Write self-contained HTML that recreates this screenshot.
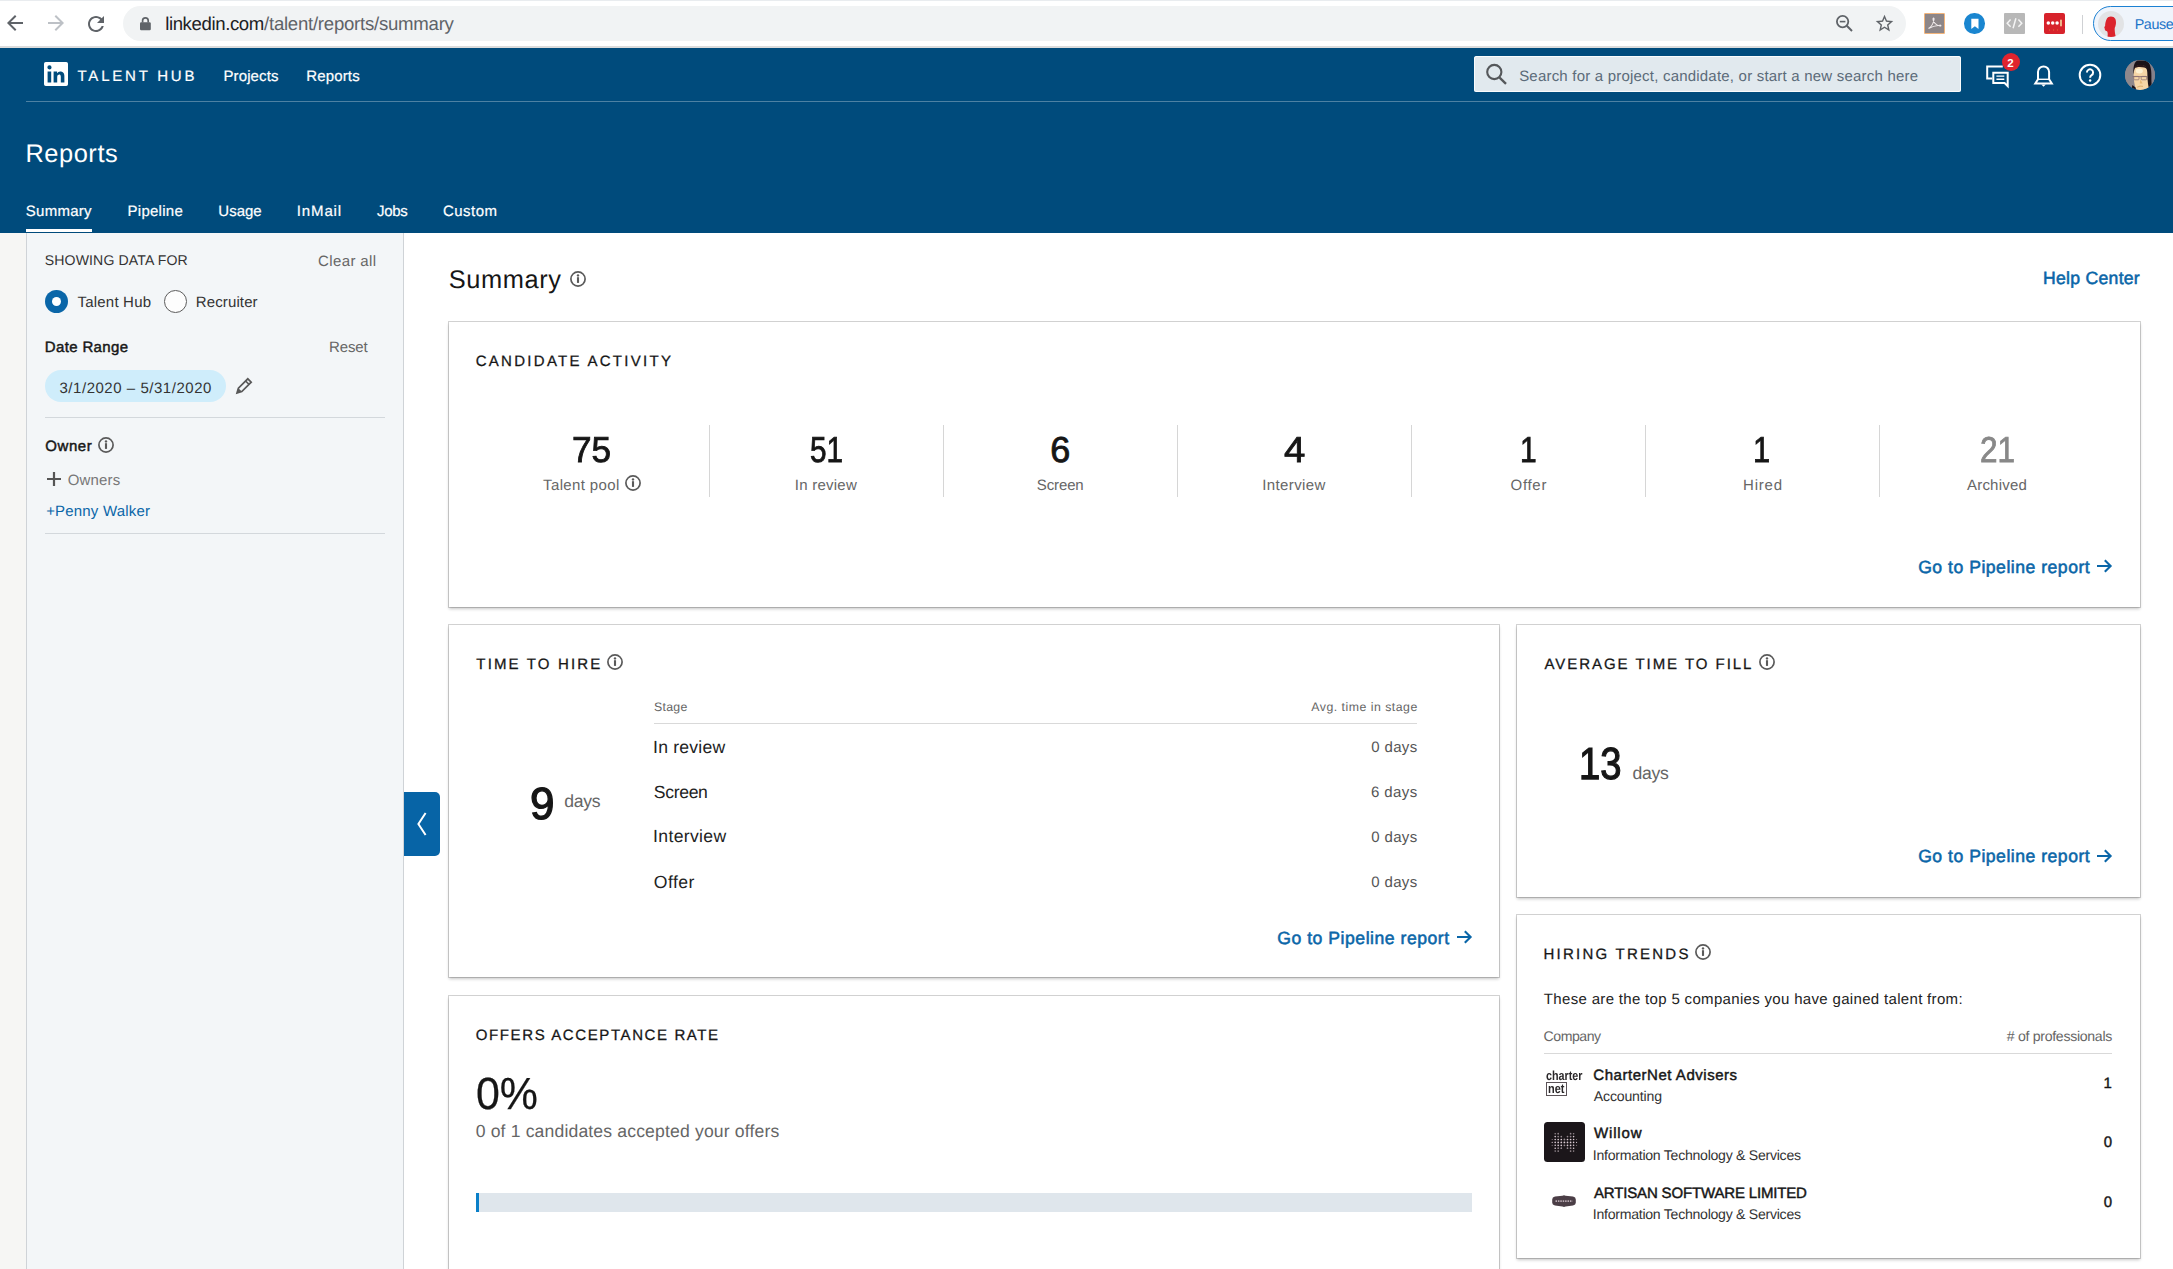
<!DOCTYPE html>
<html lang="en">
<head>
<meta charset="utf-8">
<title>Reports | LinkedIn Talent Hub</title>
<style>
*{box-sizing:border-box;margin:0;padding:0}
html,body{width:2173px;height:1269px;overflow:hidden;background:#fff}
body{font-family:"Liberation Sans",sans-serif;position:relative;text-rendering:geometricPrecision}
.abs{position:absolute}
.t{position:absolute;white-space:nowrap;line-height:normal}
svg{position:absolute;overflow:visible}
#chrome{position:absolute;left:0;top:0;width:2173px;height:48px;background:#fff}
#omni{position:absolute;left:123px;top:6px;width:1783px;height:35px;border-radius:17.5px;background:#f1f3f4}
#chromeline{position:absolute;left:0;top:46px;width:2173px;height:2px;background:#dcdcdc}
#hdr{position:absolute;left:0;top:48px;width:2173px;height:185px;background:#004b7c}
#navline{position:absolute;left:26px;top:101px;width:2147px;height:1px;background:#4d81a3}
#tabline{position:absolute;left:26px;top:229px;width:66px;height:3px;background:#fff}
#strip{position:absolute;left:0;top:233px;width:26px;height:1036px;background:#f6f6f4}
#side{position:absolute;left:26px;top:233px;width:378px;height:1036px;background:#f3f6f8;border-left:1px solid #cfd3d7;border-right:1px solid #cfd3d7}
.hr{position:absolute;height:1px;background:#d3d8dc}
.card{position:absolute;background:#fff;box-shadow:0 0 0 1px rgba(0,0,0,.17),0 2px 3px rgba(0,0,0,.22)}
.vd{position:absolute;width:1px;top:425px;height:72px;background:#d6d6d6}
#search{position:absolute;left:1474px;top:56px;width:487px;height:36px;background:#e1e9ee;border-radius:2.5px;box-shadow:inset 0 0 0 1px rgba(255,255,255,.8)}
</style>
</head>
<body>
<!-- ===== Browser chrome ===== -->
<div id="chrome">
  <div class="abs" style="left:0;top:0;width:2173px;height:1px;background:#e9ecef"></div>
  <div id="omni"></div>
  
<svg style="left:3.4px;top:11.2px" width="24" height="24" viewBox="0 0 24 24"><path fill="#5f6368" d="M20 11H7.83l5.59-5.59L12 4l-8 8 8 8 1.41-1.41L7.83 13H20v-2z"/></svg>
<svg style="left:43.5px;top:11.2px" width="24" height="24" viewBox="0 0 24 24"><path fill="#bdc1c6" d="M4 11h12.17l-5.59-5.59L12 4l8 8-8 8-1.41-1.41L16.17 13H4v-2z"/></svg>
<svg style="left:83.5px;top:11.5px" width="24" height="24" viewBox="0 0 24 24"><path fill="#5f6368" d="M17.65 6.35C16.2 4.9 14.21 4 12 4c-4.42 0-7.99 3.58-7.99 8s3.57 8 7.99 8c3.73 0 6.84-2.55 7.73-6h-2.08c-.82 2.33-3.04 4-5.65 4-3.31 0-6-2.69-6-6s2.69-6 6-6c1.66 0 3.14.69 4.22 1.78L13 11h7V4l-2.35 2.35z"/></svg>
<svg style="left:139px;top:16px" width="13" height="15" viewBox="0 0 13 15"><rect x="1" y="6.2" width="10.8" height="8" rx="1.2" fill="#5f6368"/><path d="M3.6 6.5V4.6a2.8 2.8 0 0 1 5.6 0V6.5" fill="none" stroke="#5f6368" stroke-width="1.7"/></svg>
<!-- zoom out -->
<svg style="left:1834px;top:13px" width="20" height="20" viewBox="0 0 20 20"><circle cx="8.6" cy="8.6" r="5.7" fill="none" stroke="#5f6368" stroke-width="1.8"/><path d="M12.8 12.8L18 18" stroke="#5f6368" stroke-width="2"/><path d="M5.8 8.6H11.4" stroke="#5f6368" stroke-width="1.6"/></svg>
<!-- star -->
<svg style="left:1874px;top:13px" width="21" height="21" viewBox="0 0 24 24"><path fill="#5f6368" d="M22 9.24l-7.19-.62L12 2 9.19 8.63 2 9.24l5.46 4.73L5.82 21 12 17.27 18.18 21l-1.63-7.03L22 9.24zM12 15.4l-3.76 2.27 1-4.28-3.32-2.88 4.38-.38L12 6.1l1.71 4.04 4.38.38-3.32 2.88 1 4.28L12 15.4z"/></svg>
<!-- acrobat ext -->
<div class="abs" style="left:1924px;top:13px;width:21px;height:21px;background:#8d8688;border:1.5px solid #f2b47a;border-radius:1px"></div>
<svg style="left:1926px;top:15px" width="17" height="17" viewBox="0 0 17 17"><path d="M2.5 13.5C4.5 12.5 7 9.5 8 4.5C8.3 3 7 2.5 7 4C7 7 10 10.5 14 11C15.5 11.2 15 10 13.5 10.2C10 10.5 5 12 2.5 13.5Z" fill="none" stroke="#efe9ea" stroke-width="1.1"/></svg>
<!-- blue bookmark ext -->
<div class="abs" style="left:1964.4px;top:13.3px;width:20.4px;height:20.4px;border-radius:50%;background:#1a86d0"></div>
<svg style="left:1969.6px;top:17.9px" width="10" height="12" viewBox="0 0 10 12"><path d="M1.3 0.8H8.5V10.9L4.9 8.3L1.3 10.9Z" fill="#fff"/></svg>
<!-- grey code ext -->
<div class="abs" style="left:2004px;top:13.3px;width:21px;height:20.4px;background:#b8b8b8;border-radius:1px"></div>
<svg style="left:2004px;top:13.3px" width="21" height="20.4" viewBox="0 0 21 20.4"><path d="M6.6 6.6L3.2 10.2L6.6 13.8M14.4 6.6L17.8 10.2L14.4 13.8M11.9 5.2L9.1 15.2" fill="none" stroke="#f4f4f4" stroke-width="1.5"/></svg>
<!-- lastpass ext -->
<div class="abs" style="left:2044.4px;top:13.3px;width:20.4px;height:20.4px;background:#d7222b;border-radius:2px"></div>
<svg style="left:2044.4px;top:13.3px" width="20.4" height="20.4" viewBox="0 0 20.4 20.4"><circle cx="4.3" cy="10" r="1.75" fill="#fff"/><circle cx="8.7" cy="10" r="1.75" fill="#fff"/><circle cx="13.1" cy="10" r="1.75" fill="#fff"/><rect x="16.2" y="6.7" width="1.6" height="6.6" fill="#f3d9a0"/><circle cx="5.6" cy="17" r="0.5" fill="#e8a23a"/><circle cx="9.6" cy="17" r="0.5" fill="#e8a23a"/><circle cx="13.6" cy="17" r="0.5" fill="#e8a23a"/></svg>
<div class="abs" style="left:2082px;top:15px;width:1px;height:19px;background:#cfd1d4"></div>
<!-- profile pill -->
<div class="abs" style="left:2093.3px;top:6px;width:120px;height:35px;border-radius:17.5px;border:1.6px solid #1b80d2;background:#eff4fb"></div>
<div class="abs" style="left:2097.6px;top:10.5px;width:26px;height:26px;border-radius:50%;background:#e2e3e5;overflow:hidden">
  <svg style="left:-1.6px;top:0.4px" width="30" height="30" viewBox="0 0 26 26"><path d="M9.5 6.5C10.5 4.2 15.5 4 16.8 7C17.8 9.5 17.2 12.5 16.3 14.5C16 16 16.4 19.5 17.2 22.5L9.8 23C10.4 20 10.2 18.5 9.6 17.5C8.2 17.3 7.4 16.4 7.6 15.2C6.9 14.7 7.2 13.6 7.9 13C7.9 10.8 8.4 8.6 9.5 6.5Z" fill="#dc232c"/></svg>
</div>

</div>
<div id="chromeline"></div>

<!-- ===== LinkedIn header ===== -->
<div id="hdr"></div>
<div id="navline"></div>
<div id="tabline"></div>
<div id="search"></div>

<!-- linkedin logo -->
<svg style="left:44px;top:62px" width="24" height="24" viewBox="2 2 20 20"><path fill="#fff" d="M20.5 2h-17A1.5 1.5 0 002 3.5v17A1.5 1.5 0 003.5 22h17a1.5 1.5 0 001.5-1.5v-17A1.5 1.5 0 0020.5 2zM8 19H5v-9h3zM6.5 8.25A1.75 1.75 0 118.3 6.5a1.78 1.78 0 01-1.8 1.75zM19 19h-3v-4.74c0-1.42-.6-1.93-1.38-1.93A1.74 1.74 0 0013 14.19a.66.66 0 000 .14V19h-3v-9h2.9v1.3a3.11 3.11 0 012.7-1.4c1.55 0 3.36.86 3.36 3.66z"/></svg>
<!-- search icon -->
<svg style="left:1484px;top:62px" width="24" height="24" viewBox="0 0 24 24"><circle cx="10.3" cy="10" r="7.1" fill="none" stroke="#55585b" stroke-width="2.1"/><path d="M15.6 15.6L22 21.8" stroke="#55585b" stroke-width="2.3"/></svg>
<!-- messages -->
<svg style="left:1984px;top:62px" width="28" height="28" viewBox="0 0 28 28"><path d="M18.8 4.6H3.2V16.4H8.2" fill="none" stroke="#fff" stroke-width="2"/><path d="M9.3 10.7H23.7V24.2L20.6 21.1H9.3Z" fill="none" stroke="#fff" stroke-width="2" stroke-linejoin="miter"/><path d="M12.4 14.1H20.3M12.4 17.2H20.3" stroke="#fff" stroke-width="1.4"/></svg>
<div class="abs" style="left:2001.8px;top:52.8px;width:18.4px;height:18.4px;border-radius:50%;background:#e0242e"></div>
<!-- bell -->
<svg style="left:2031px;top:62px" width="26" height="28" viewBox="0 0 26 28"><path d="M7 17.3V10a5.55 5.55 0 0 1 11.1 0V17.3L20.8 21.5H4.3Z" fill="none" stroke="#fff" stroke-width="2" stroke-linejoin="miter"/><path d="M7 17.3H18.1" stroke="#fff" stroke-width="1.4"/><path d="M10.3 22.4H14.8L12.55 24.8Z" fill="#fff"/></svg>
<!-- help -->
<svg style="left:2077.6px;top:63.4px" width="24" height="24" viewBox="0 0 24 24"><circle cx="12" cy="12" r="10.3" fill="none" stroke="#fff" stroke-width="2"/><path d="M8.9 9.4a3.1 3.1 0 1 1 4.7 2.7c-1 .6-1.5 1.2-1.5 2.6" fill="none" stroke="#fff" stroke-width="2"/><circle cx="12.1" cy="17.6" r="1.25" fill="#fff"/></svg>
<!-- avatar -->
<div class="abs" style="left:2125px;top:60px;width:30.2px;height:30.2px;border-radius:50%;overflow:hidden;background:#8c868d">
  <svg style="left:0;top:0;filter:blur(0.55px)" width="30" height="30" viewBox="0 0 30 30">
    <rect x="0" y="0" width="9" height="30" fill="#8f888c"/>
    <rect x="23" y="0" width="7" height="30" fill="#85808a"/>
    <path d="M8.4 13C8.2 5.5 10 1.2 12.5 0.6H21.5C25 2.5 26.6 9 26.4 16C26.3 21 26.6 25 27 28L23 29.5L21.5 10L10 9.5L9.4 15Z" fill="#1b1217"/>
    <path d="M8.7 16C8.5 9 10.4 5.1 15.4 5.1S22.6 8 22.4 15C22.2 21 23.4 26 24.4 31H11.4C10.6 28 8.9 24 8.7 16Z" fill="#f6d5a6"/>
    <path d="M8.9 8.6C10 5.6 12.5 4.7 15.5 4.8S21.6 6 22.5 9.4C19.6 6.6 12 6.4 8.9 8.6Z" fill="#2a1719"/>
    <ellipse cx="14.3" cy="11" rx="3.6" ry="2.4" fill="#fdf1d2"/>
    <path d="M7.6 16.6H22.6" stroke="#7a6068" stroke-width="0.8"/>
    <rect x="8.8" y="16.4" width="5.2" height="3.4" rx="0.8" fill="none" stroke="#8a6e72" stroke-width="0.7"/>
    <rect x="16.2" y="16.4" width="5.4" height="3.4" rx="0.8" fill="none" stroke="#8a6e72" stroke-width="0.7"/>
    <path d="M15.4 19.5L17.6 23.4L14.8 23.6Z" fill="#e5b877"/>
    <path d="M12.2 27.2Q15 25.4 18 26.4" stroke="#dcae6c" stroke-width="1" fill="none"/>
    <path d="M7.4 25L10.4 27.4L11.6 31H6Z" fill="#1b1217"/>
  </svg>
</div>


<!-- ===== Sidebar ===== -->
<div id="strip"></div>
<div id="side"></div>
<div class="hr" style="left:45px;top:417px;width:340px"></div>
<div class="hr" style="left:45px;top:533px;width:340px"></div>
<div class="abs" style="left:45px;top:370px;width:181px;height:32px;border-radius:16px;background:#cfedfb"></div>

<!-- radios -->
<div class="abs" style="left:45.2px;top:290px;width:22.8px;height:22.8px;border-radius:50%;background:#0a66a8"></div>
<div class="abs" style="left:51.8px;top:296.6px;width:9.6px;height:9.6px;border-radius:50%;background:#fff"></div>
<div class="abs" style="left:164px;top:290px;width:22.8px;height:22.8px;border-radius:50%;border:1.4px solid #5c5c5c;background:#fdfdfd"></div>
<!-- pencil -->
<svg style="left:234px;top:376px" width="20" height="20" viewBox="0 0 20 20"><path d="M3 17L4.4 12.2L13.8 2.8L17.2 6.2L7.8 15.6Z" fill="none" stroke="#585858" stroke-width="1.7" stroke-linejoin="miter"/><path d="M3 17L4.4 12.2L7.8 15.6Z" fill="#585858"/><path d="M11.6 5L15 8.4" stroke="#585858" stroke-width="1.5"/></svg>
<!-- plus -->
<svg style="left:46px;top:471px" width="16" height="16" viewBox="0 0 16 16"><path d="M1 8H15M8 1V15" stroke="#555" stroke-width="2.2"/></svg>
<svg style="left:95.9px;top:435.2px" width="20" height="20" viewBox="-10 -10 20 20"><circle r="7.1" fill="none" stroke="#5a5a5a" stroke-width="1.7"/><circle cy="-3.6" r="1.2" fill="#5a5a5a"/><rect x="-1.05" y="-1.8" width="2.1" height="5.7" fill="#5a5a5a"/></svg>

<!-- ===== Cards ===== -->
<div class="card" style="left:449px;top:322px;width:1691px;height:285px"></div>
<div class="card" style="left:449px;top:625px;width:1050px;height:352px"></div>
<div class="card" style="left:449px;top:996px;width:1050px;height:300px"></div>
<div class="card" style="left:1517px;top:625px;width:623px;height:272px"></div>
<div class="card" style="left:1517px;top:915px;width:623px;height:343px"></div>
<div class="vd" style="left:709px"></div><div class="vd" style="left:943px"></div><div class="vd" style="left:1177px"></div>
<div class="vd" style="left:1411px"></div><div class="vd" style="left:1645px"></div><div class="vd" style="left:1879px"></div>
<div class="hr" style="left:654px;top:723px;width:763px;background:#d9d9d9"></div>
<div class="hr" style="left:1544px;top:1053px;width:568px;background:#d9d9d9"></div>
<div class="abs" style="left:476px;top:1193px;width:996px;height:19px;background:#dfe6ec"></div>
<div class="abs" style="left:476px;top:1193px;width:3px;height:19px;background:#0a7fc8"></div>
<!-- collapse button -->
<div class="abs" style="left:404px;top:792px;width:36px;height:63.5px;background:#0764a6;border-radius:0 5px 5px 0"></div>
<svg style="left:567.8px;top:269.0px" width="20" height="20" viewBox="-10 -10 20 20"><circle r="7.1" fill="none" stroke="#5a5a5a" stroke-width="1.7"/><circle cy="-3.6" r="1.2" fill="#5a5a5a"/><rect x="-1.05" y="-1.8" width="2.1" height="5.7" fill="#5a5a5a"/></svg><svg style="left:623.0px;top:472.9px" width="20" height="20" viewBox="-10 -10 20 20"><circle r="7.1" fill="none" stroke="#5a5a5a" stroke-width="1.7"/><circle cy="-3.6" r="1.2" fill="#5a5a5a"/><rect x="-1.05" y="-1.8" width="2.1" height="5.7" fill="#5a5a5a"/></svg><svg style="left:604.8px;top:652.0px" width="20" height="20" viewBox="-10 -10 20 20"><circle r="7.1" fill="none" stroke="#5a5a5a" stroke-width="1.7"/><circle cy="-3.6" r="1.2" fill="#5a5a5a"/><rect x="-1.05" y="-1.8" width="2.1" height="5.7" fill="#5a5a5a"/></svg><svg style="left:1757.0px;top:652.0px" width="20" height="20" viewBox="-10 -10 20 20"><circle r="7.1" fill="none" stroke="#5a5a5a" stroke-width="1.7"/><circle cy="-3.6" r="1.2" fill="#5a5a5a"/><rect x="-1.05" y="-1.8" width="2.1" height="5.7" fill="#5a5a5a"/></svg><svg style="left:1693.2px;top:942.0px" width="20" height="20" viewBox="-10 -10 20 20"><circle r="7.1" fill="none" stroke="#5a5a5a" stroke-width="1.7"/><circle cy="-3.6" r="1.2" fill="#5a5a5a"/><rect x="-1.05" y="-1.8" width="2.1" height="5.7" fill="#5a5a5a"/></svg><svg style="left:2095.2px;top:558.4px" width="18" height="16" viewBox="0 0 18 16"><path d="M2 8H15.5M9.8 2.3L15.6 8L9.8 13.7" fill="none" stroke="#0a66a8" stroke-width="2.1" stroke-linejoin="miter"/></svg><svg style="left:1454.8px;top:929.4px" width="18" height="16" viewBox="0 0 18 16"><path d="M2 8H15.5M9.8 2.3L15.6 8L9.8 13.7" fill="none" stroke="#0a66a8" stroke-width="2.1" stroke-linejoin="miter"/></svg><svg style="left:2095.2px;top:847.8px" width="18" height="16" viewBox="0 0 18 16"><path d="M2 8H15.5M9.8 2.3L15.6 8L9.8 13.7" fill="none" stroke="#0a66a8" stroke-width="2.1" stroke-linejoin="miter"/></svg>
<!-- chevron -->
<svg style="left:414px;top:811px" width="16" height="26" viewBox="0 0 16 26"><path d="M11.6 2L4.4 13L11.6 24" fill="none" stroke="#fff" stroke-width="2"/></svg>
<!-- charternet logo -->
<div class="abs" style="left:1544px;top:1066px;width:42px;height:34px;overflow:hidden;font-weight:700;color:#2a2729;font-size:13.2px;line-height:13px">
  <div class="abs" style="left:1.8px;top:2.6px;white-space:nowrap;transform:scaleX(0.815);transform-origin:0 0">charter</div>
  <div class="abs" style="left:2.2px;top:15.7px;width:20.6px;height:14px;border:1.2px solid #5a5257"></div>
  <div class="abs" style="left:4.3px;top:15.7px;white-space:nowrap;transform:scaleX(0.83);transform-origin:0 0">net</div>
</div>
<!-- willow logo -->
<div class="abs" style="left:1544.2px;top:1122px;width:40.8px;height:40px;border-radius:3.5px;background:#1b161a"></div>
<svg style="left:1544.2px;top:1122px" width="41" height="40" viewBox="0 0 41 40"><circle cx="8.2" cy="17.5" r="0.55" fill="#e6d6de" opacity="0.6"/><circle cx="8.2" cy="20.4" r="0.55" fill="#e6d6de" opacity="0.95"/><circle cx="8.2" cy="23.3" r="0.55" fill="#e6d6de" opacity="0.6"/><circle cx="11.2" cy="11.7" r="0.8" fill="#e6d6de" opacity="0.6"/><circle cx="11.2" cy="14.6" r="0.8" fill="#e6d6de" opacity="0.95"/><circle cx="11.2" cy="17.5" r="0.8" fill="#e6d6de" opacity="0.95"/><circle cx="11.2" cy="20.4" r="0.8" fill="#e6d6de" opacity="0.95"/><circle cx="11.2" cy="23.3" r="0.8" fill="#e6d6de" opacity="0.95"/><circle cx="11.2" cy="26.2" r="0.8" fill="#e6d6de" opacity="0.95"/><circle cx="11.2" cy="29.1" r="0.8" fill="#e6d6de" opacity="0.6"/><circle cx="14.2" cy="11.7" r="0.85" fill="#e6d6de" opacity="0.6"/><circle cx="14.2" cy="14.6" r="0.85" fill="#e6d6de" opacity="0.6"/><circle cx="14.2" cy="17.5" r="0.85" fill="#e6d6de" opacity="0.95"/><circle cx="14.2" cy="20.4" r="0.85" fill="#e6d6de" opacity="0.95"/><circle cx="14.2" cy="23.3" r="0.85" fill="#e6d6de" opacity="0.95"/><circle cx="14.2" cy="26.2" r="0.85" fill="#e6d6de" opacity="0.6"/><circle cx="14.2" cy="29.1" r="0.85" fill="#e6d6de" opacity="0.6"/><circle cx="17.3" cy="14.6" r="0.85" fill="#e6d6de" opacity="0.6"/><circle cx="17.3" cy="17.5" r="0.85" fill="#e6d6de" opacity="0.95"/><circle cx="17.3" cy="20.4" r="0.85" fill="#e6d6de" opacity="0.95"/><circle cx="17.3" cy="23.3" r="0.85" fill="#e6d6de" opacity="0.95"/><circle cx="17.3" cy="26.2" r="0.85" fill="#e6d6de" opacity="0.6"/><circle cx="20.4" cy="17.5" r="0.9" fill="#e6d6de" opacity="0.6"/><circle cx="20.4" cy="20.4" r="0.9" fill="#e6d6de" opacity="0.95"/><circle cx="20.4" cy="23.3" r="0.9" fill="#e6d6de" opacity="0.6"/><circle cx="23.5" cy="14.6" r="0.85" fill="#e6d6de" opacity="0.6"/><circle cx="23.5" cy="17.5" r="0.85" fill="#e6d6de" opacity="0.95"/><circle cx="23.5" cy="20.4" r="0.85" fill="#e6d6de" opacity="0.95"/><circle cx="23.5" cy="23.3" r="0.85" fill="#e6d6de" opacity="0.95"/><circle cx="23.5" cy="26.2" r="0.85" fill="#e6d6de" opacity="0.6"/><circle cx="26.6" cy="11.7" r="0.85" fill="#e6d6de" opacity="0.6"/><circle cx="26.6" cy="14.6" r="0.85" fill="#e6d6de" opacity="0.6"/><circle cx="26.6" cy="17.5" r="0.85" fill="#e6d6de" opacity="0.95"/><circle cx="26.6" cy="20.4" r="0.85" fill="#e6d6de" opacity="0.95"/><circle cx="26.6" cy="23.3" r="0.85" fill="#e6d6de" opacity="0.95"/><circle cx="26.6" cy="26.2" r="0.85" fill="#e6d6de" opacity="0.6"/><circle cx="26.6" cy="29.1" r="0.85" fill="#e6d6de" opacity="0.6"/><circle cx="29.6" cy="11.7" r="0.8" fill="#e6d6de" opacity="0.6"/><circle cx="29.6" cy="14.6" r="0.8" fill="#e6d6de" opacity="0.95"/><circle cx="29.6" cy="17.5" r="0.8" fill="#e6d6de" opacity="0.95"/><circle cx="29.6" cy="20.4" r="0.8" fill="#e6d6de" opacity="0.95"/><circle cx="29.6" cy="23.3" r="0.8" fill="#e6d6de" opacity="0.95"/><circle cx="29.6" cy="26.2" r="0.8" fill="#e6d6de" opacity="0.95"/><circle cx="29.6" cy="29.1" r="0.8" fill="#e6d6de" opacity="0.6"/><circle cx="32.6" cy="17.5" r="0.55" fill="#e6d6de" opacity="0.6"/><circle cx="32.6" cy="20.4" r="0.55" fill="#e6d6de" opacity="0.95"/><circle cx="32.6" cy="23.3" r="0.55" fill="#e6d6de" opacity="0.6"/></svg>
<!-- artisan logo -->
<svg style="left:1551.4px;top:1194px" width="26" height="14" viewBox="0 0 26 14"><path d="M1.2 5.4Q1.2 3.2 4 2.6L11.5 1.7L13 1.2L14.5 1.7L22 2.6Q24.8 3.2 24.8 5.4V8.8Q24.8 11 22 11.6L14.5 12.4L13 13L11.5 12.4L4 11.6Q1.2 11 1.2 8.8Z" fill="#4b3e46"/><path d="M4.5 7.1H21.5" stroke="#b9aab2" stroke-width="1.7" stroke-dasharray="1.5 0.9"/></svg>


<!-- ===== Text ===== -->
<span class="t" style="left:165.15px;top:13px;font-size:18.6px;color:#202124;letter-spacing:-0.380px;">linkedin.com</span>
<span class="t" style="left:264.05px;top:13px;font-size:18.6px;color:#5f6368;letter-spacing:-0.249px;">/talent/reports/summary</span>
<span class="t" style="left:2134.68px;top:17px;font-size:14.3px;color:#1a73c8;letter-spacing:-0.367px;">Paused</span>
<span class="t" style="left:77.56px;top:68px;font-size:15.0px;color:#ffffff;letter-spacing:2.771px;-webkit-text-stroke:0.2px #ffffff;">TALENT HUB</span>
<span class="t" style="left:223.39px;top:68px;font-size:15.0px;color:#ffffff;letter-spacing:0.136px;-webkit-text-stroke:0.2px #ffffff;">Projects</span>
<span class="t" style="left:306.29px;top:68px;font-size:15.0px;color:#ffffff;letter-spacing:0.147px;-webkit-text-stroke:0.2px #ffffff;">Reports</span>
<span class="t" style="left:1519.15px;top:68px;font-size:15.0px;color:#5b6b79;letter-spacing:0.207px;">Search for a project, candidate, or start a new search here</span>
<span class="t" style="left:2007.32px;top:58px;font-size:11.5px;color:#ffffff;font-weight:700;">2</span>
<span class="t" style="left:25.41px;top:140px;font-size:25.4px;color:#ffffff;letter-spacing:0.564px;">Reports</span>
<span class="t" style="left:25.77px;top:203px;font-size:15.0px;color:#ffffff;letter-spacing:0.266px;-webkit-text-stroke:0.2px #ffffff;">Summary</span>
<span class="t" style="left:127.49px;top:203px;font-size:15.0px;color:#ffffff;letter-spacing:0.277px;-webkit-text-stroke:0.2px #ffffff;">Pipeline</span>
<span class="t" style="left:218.34px;top:203px;font-size:15.0px;color:#ffffff;-webkit-text-stroke:0.2px #ffffff;">Usage</span>
<span class="t" style="left:296.83px;top:203px;font-size:15.0px;color:#ffffff;letter-spacing:0.851px;-webkit-text-stroke:0.2px #ffffff;">InMail</span>
<span class="t" style="left:377.05px;top:203px;font-size:15.0px;color:#ffffff;letter-spacing:-0.338px;-webkit-text-stroke:0.2px #ffffff;">Jobs</span>
<span class="t" style="left:442.91px;top:203px;font-size:15.0px;color:#ffffff;letter-spacing:0.490px;-webkit-text-stroke:0.2px #ffffff;">Custom</span>
<span class="t" style="left:44.76px;top:252px;font-size:14.1px;color:#333333;letter-spacing:0.121px;">SHOWING DATA FOR</span>
<span class="t" style="left:318.10px;top:253px;font-size:15.0px;color:#666666;letter-spacing:0.377px;">Clear all</span>
<span class="t" style="left:77.56px;top:294px;font-size:15.0px;color:#333333;letter-spacing:0.195px;">Talent Hub</span>
<span class="t" style="left:195.75px;top:294px;font-size:15.0px;color:#333333;letter-spacing:0.125px;">Recruiter</span>
<span class="t" style="left:44.85px;top:339px;font-size:15.0px;color:#161616;letter-spacing:0.346px;-webkit-text-stroke:0.45px #161616;">Date Range</span>
<span class="t" style="left:329.05px;top:339px;font-size:15.0px;color:#666666;letter-spacing:-0.132px;">Reset</span>
<span class="t" style="left:59.49px;top:380px;font-size:15.0px;color:#333333;letter-spacing:0.531px;">3/1/2020 – 5/31/2020</span>
<span class="t" style="left:45.32px;top:438px;font-size:15.0px;color:#161616;letter-spacing:0.550px;-webkit-text-stroke:0.45px #161616;">Owner</span>
<span class="t" style="left:67.65px;top:472px;font-size:15.0px;color:#777777;letter-spacing:0.199px;">Owners</span>
<span class="t" style="left:46.15px;top:503px;font-size:15.0px;color:#0a66a8;letter-spacing:0.183px;">+Penny Walker</span>
<span class="t" style="left:448.72px;top:266px;font-size:25.4px;color:#161616;letter-spacing:0.601px;">Summary</span>
<span class="t" style="left:2043.09px;top:268px;font-size:17.6px;color:#0a66a8;letter-spacing:0.277px;-webkit-text-stroke:0.55px #0a66a8;">Help Center</span>
<span class="t" style="left:475.66px;top:353px;font-size:15.0px;color:#161616;letter-spacing:2.288px;-webkit-text-stroke:0.28px #161616;">CANDIDATE ACTIVITY</span>
<span class="t" style="left:572.10px;top:429px;font-size:36.0px;color:#161616;-webkit-text-stroke:0.85px #161616;transform:scaleX(0.976);transform-origin:0 0;">75</span>
<span class="t" style="left:809.97px;top:429px;font-size:36.0px;color:#161616;-webkit-text-stroke:0.85px #161616;transform:scaleX(0.825);transform-origin:0 0;">51</span>
<span class="t" style="left:1050.25px;top:429px;font-size:36.0px;color:#161616;-webkit-text-stroke:0.85px #161616;transform:scaleX(1.000);transform-origin:0 0;">6</span>
<span class="t" style="left:1283.97px;top:429px;font-size:36.0px;color:#161616;-webkit-text-stroke:0.85px #161616;transform:scaleX(1.064);transform-origin:0 0;">4</span>
<span class="t" style="left:1519.83px;top:429px;font-size:36.0px;color:#161616;-webkit-text-stroke:0.85px #161616;transform:scaleX(0.832);transform-origin:0 0;">1</span>
<span class="t" style="left:1753.38px;top:429px;font-size:36.0px;color:#161616;-webkit-text-stroke:0.85px #161616;transform:scaleX(0.856);transform-origin:0 0;">1</span>
<span class="t" style="left:1979.57px;top:429px;font-size:36.0px;color:#888888;-webkit-text-stroke:0.85px #888888;transform:scaleX(0.873);transform-origin:0 0;">21</span>
<span class="t" style="left:543.06px;top:477px;font-size:15.0px;color:#666666;letter-spacing:0.371px;">Talent pool</span>
<span class="t" style="left:794.73px;top:477px;font-size:15.0px;color:#666666;letter-spacing:0.255px;">In review</span>
<span class="t" style="left:1036.85px;top:477px;font-size:15.0px;color:#666666;letter-spacing:-0.138px;">Screen</span>
<span class="t" style="left:1262.23px;top:477px;font-size:15.0px;color:#666666;letter-spacing:0.393px;">Interview</span>
<span class="t" style="left:1510.55px;top:477px;font-size:15.0px;color:#666666;letter-spacing:0.692px;">Offer</span>
<span class="t" style="left:1743.05px;top:477px;font-size:15.0px;color:#666666;letter-spacing:0.780px;">Hired</span>
<span class="t" style="left:1966.95px;top:477px;font-size:15.0px;color:#666666;letter-spacing:0.225px;">Archived</span>
<span class="t" style="left:1918.18px;top:557px;font-size:17.6px;color:#0a66a8;letter-spacing:0.508px;-webkit-text-stroke:0.55px #0a66a8;">Go to Pipeline report</span>
<span class="t" style="left:476.35px;top:656px;font-size:15.0px;color:#161616;letter-spacing:2.140px;-webkit-text-stroke:0.28px #161616;">TIME TO HIRE</span>
<span class="t" style="left:653.94px;top:700px;font-size:12.3px;color:#666666;letter-spacing:0.326px;">Stage</span>
<span class="t" style="left:1311.35px;top:700px;font-size:12.3px;color:#666666;letter-spacing:0.495px;">Avg. time in stage</span>
<span class="t" style="left:653.04px;top:737px;font-size:17.6px;color:#222222;letter-spacing:0.220px;">In review</span>
<span class="t" style="left:1371.28px;top:739px;font-size:15.0px;color:#555555;letter-spacing:0.337px;">0 days</span>
<span class="t" style="left:653.79px;top:782px;font-size:17.6px;color:#222222;letter-spacing:-0.325px;">Screen</span>
<span class="t" style="left:1371.10px;top:784px;font-size:15.0px;color:#555555;letter-spacing:0.373px;">6 days</span>
<span class="t" style="left:653.04px;top:826px;font-size:17.6px;color:#222222;letter-spacing:0.345px;">Interview</span>
<span class="t" style="left:1371.28px;top:829px;font-size:15.0px;color:#555555;letter-spacing:0.337px;">0 days</span>
<span class="t" style="left:653.82px;top:872px;font-size:17.6px;color:#222222;letter-spacing:0.411px;">Offer</span>
<span class="t" style="left:1371.28px;top:874px;font-size:15.0px;color:#555555;letter-spacing:0.337px;">0 days</span>
<span class="t" style="left:530.19px;top:778px;font-size:45.0px;color:#161616;-webkit-text-stroke:1.3px #161616;transform:scaleX(0.978);transform-origin:0 0;">9</span>
<span class="t" style="left:564.33px;top:791px;font-size:17.6px;color:#666666;letter-spacing:-0.316px;">days</span>
<span class="t" style="left:1277.28px;top:928px;font-size:17.6px;color:#0a66a8;letter-spacing:0.523px;-webkit-text-stroke:0.55px #0a66a8;">Go to Pipeline report</span>
<span class="t" style="left:475.81px;top:1027px;font-size:15.0px;color:#161616;letter-spacing:1.603px;-webkit-text-stroke:0.28px #161616;">OFFERS ACCEPTANCE RATE</span>
<span class="t" style="left:475.92px;top:1068px;font-size:45.0px;color:#161616;-webkit-text-stroke:0.25px #161616;transform:scaleX(0.953);transform-origin:0 0;">0%</span>
<span class="t" style="left:475.67px;top:1121px;font-size:17.6px;color:#666666;letter-spacing:0.152px;">0 of 1 candidates accepted your offers</span>
<span class="t" style="left:1544.42px;top:656px;font-size:15.0px;color:#161616;letter-spacing:1.962px;-webkit-text-stroke:0.28px #161616;">AVERAGE TIME TO FILL</span>
<span class="t" style="left:1578.51px;top:738px;font-size:45.0px;color:#161616;-webkit-text-stroke:1.3px #161616;transform:scaleX(0.850);transform-origin:0 0;">13</span>
<span class="t" style="left:1632.53px;top:763px;font-size:17.6px;color:#666666;letter-spacing:-0.316px;">days</span>
<span class="t" style="left:1918.18px;top:846px;font-size:17.6px;color:#0a66a8;letter-spacing:0.508px;-webkit-text-stroke:0.55px #0a66a8;">Go to Pipeline report</span>
<span class="t" style="left:1543.42px;top:946px;font-size:15.0px;color:#161616;letter-spacing:2.243px;-webkit-text-stroke:0.28px #161616;">HIRING TRENDS</span>
<span class="t" style="left:1543.86px;top:991px;font-size:15.0px;color:#222222;letter-spacing:0.324px;">These are the top 5 companies you have gained talent from:</span>
<span class="t" style="left:1543.61px;top:1028px;font-size:14.1px;color:#666666;letter-spacing:-0.463px;">Company</span>
<span class="t" style="left:2006.75px;top:1028px;font-size:14.1px;color:#666666;letter-spacing:-0.291px;"># of professionals</span>
<span class="t" style="left:1593.37px;top:1067px;font-size:15.0px;color:#161616;letter-spacing:0.527px;-webkit-text-stroke:0.45px #161616;">CharterNet Advisers</span>
<span class="t" style="left:1593.85px;top:1088px;font-size:14.1px;color:#333333;letter-spacing:-0.178px;">Accounting</span>
<span class="t" style="left:2103.55px;top:1075px;font-size:15.0px;color:#161616;-webkit-text-stroke:0.4px #161616;">1</span>
<span class="t" style="left:1593.95px;top:1125px;font-size:15.0px;color:#161616;letter-spacing:0.855px;-webkit-text-stroke:0.45px #161616;">Willow</span>
<span class="t" style="left:1592.84px;top:1147px;font-size:14.1px;color:#333333;letter-spacing:-0.267px;">Information Technology &amp; Services</span>
<span class="t" style="left:2103.76px;top:1134px;font-size:15.0px;color:#161616;-webkit-text-stroke:0.4px #161616;">0</span>
<span class="t" style="left:1593.98px;top:1185px;font-size:15.0px;color:#161616;letter-spacing:-0.161px;-webkit-text-stroke:0.45px #161616;">ARTISAN SOFTWARE LIMITED</span>
<span class="t" style="left:1592.84px;top:1206px;font-size:14.1px;color:#333333;letter-spacing:-0.267px;">Information Technology &amp; Services</span>
<span class="t" style="left:2103.76px;top:1194px;font-size:15.0px;color:#161616;-webkit-text-stroke:0.4px #161616;">0</span>
</body>
</html>
